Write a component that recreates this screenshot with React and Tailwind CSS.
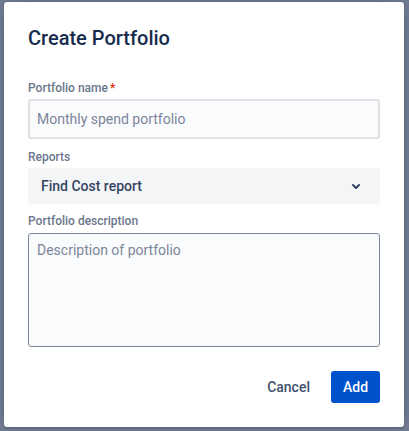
import React from "react";

function ChevronDown() {
  return (
    <svg width="24" height="24" viewBox="0 0 24 24" aria-hidden="true">
      <path
        fill="#344563"
        d="M8.292 10.293a1.009 1.009 0 000 1.419l2.939 2.965c.218.215.5.322.779.322s.556-.107.769-.322l2.93-2.955a1.01 1.01 0 000-1.419.987.987 0 00-1.406 0l-2.298 2.317-2.307-2.327a.99.99 0 00-1.406 0z"
      />
    </svg>
  );
}

export default function App() {
  return (
    <div
      className="w-[409px] h-[431px] bg-[#717c91] pt-[2px] pl-[4px] overflow-hidden"
      style={{ fontFamily: "Roboto, 'Noto Sans', 'Liberation Sans', sans-serif" }}
    >
      <div className="w-[400px] h-[425px] bg-white rounded-[3px] shadow-[0_0_0_1px_rgba(9,30,66,0.08),0_2px_1px_rgba(9,30,66,0.08),0_0_20px_-6px_rgba(9,30,66,0.31)] px-6 pt-6 flex flex-col">
        <h1 className="text-[20px] leading-6 font-medium text-[#172B4D]">Create Portfolio</h1>

        <label className="mt-[30px] text-[12px] leading-4 font-medium text-[#6B778C]">
          Portfolio name<span className="text-[#DE350B] pl-[2px]">*</span>
        </label>
        <div className="mt-[3px] h-10 border-2 border-[#DFE1E6] bg-[#FAFBFC] rounded-[3px] px-[7px] flex items-center text-[14px] leading-5 text-[#7A869A]">
          Monthly spend portfolio
        </div>

        <label className="mt-[10px] text-[12px] leading-4 font-medium text-[#6B778C]">Reports</label>
        <div className="mt-[3px] h-9 bg-[#F4F5F7] rounded-[3px] pl-[13px] pr-3 flex items-center justify-between text-[14px] leading-5 font-medium text-[#344563]">
          <span>Find Cost report</span>
          <ChevronDown />
        </div>

        <label className="mt-[9px] text-[12px] leading-4 font-medium text-[#6B778C]">
          Portfolio description
        </label>
        <div className="mt-[4px] h-[114px] border border-[#7A869A] rounded-[3px] bg-[#FAFBFC] px-2 pt-[6px] text-[14px] leading-5 text-[#7A869A]">
          Description of portfolio
        </div>

        <div className="mt-6 flex justify-end gap-[9px]">
          <button className="h-8 px-3 rounded-[3px] text-[14px] font-medium text-[#42526E]">Cancel</button>
          <button className="h-8 w-[49px] rounded-[3px] bg-[#0052CC] text-[14px] font-medium text-white">
            Add
          </button>
        </div>
      </div>
    </div>
  );
}
